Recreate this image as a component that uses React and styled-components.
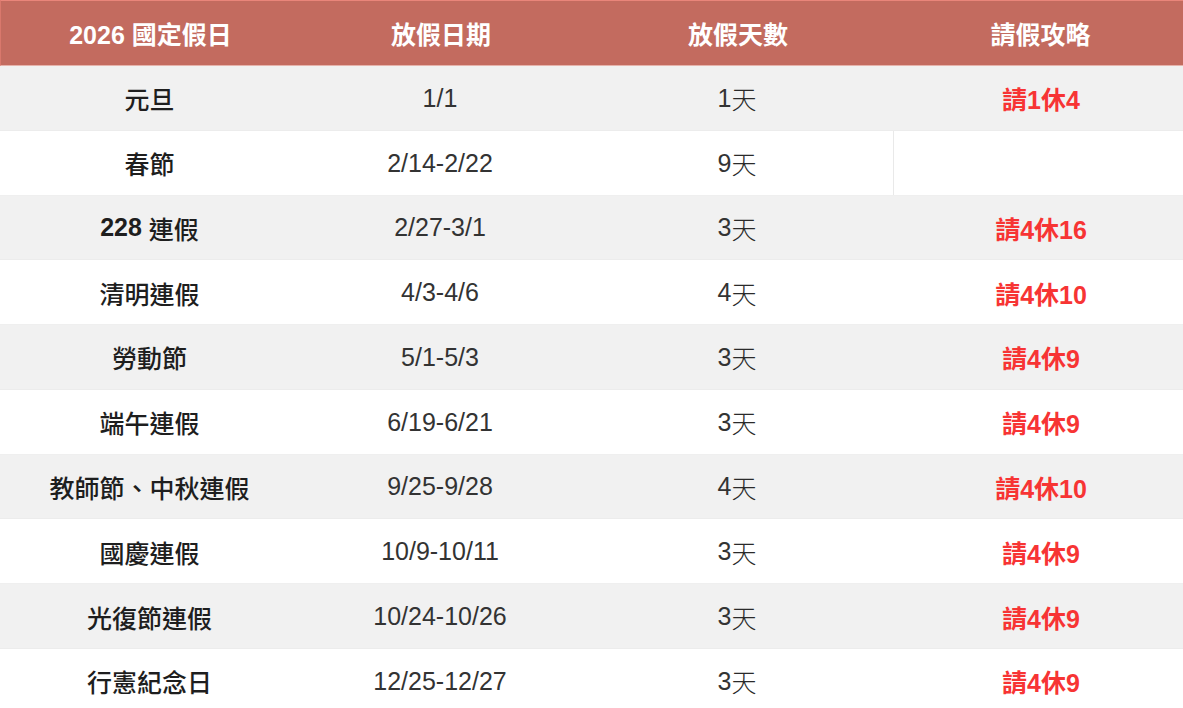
import React from "react";
import styled, { createGlobalStyle } from "styled-components";

const Global = createGlobalStyle`
  html, body { margin: 0; padding: 0; background: #ffffff; }
  body { font-family: "Liberation Sans", "Noto Sans CJK TC", Arial, sans-serif; }
`;

const Table = styled.div`
  width: 1183px;
  display: flex;
  flex-direction: column;
`;

const cols = "299px 282px 312px 1fr";

const HeadRow = styled.div`
  display: grid;
  grid-template-columns: ${cols};
  height: 66px;
  box-sizing: border-box;
  background: #c36b5f;
  border-top: 1px solid #e9857a;
  border-left: 1px solid #d9786c;
  border-bottom: 1px solid #e6b3ab;
`;

const HeadCell = styled.div`
  display: flex;
  align-items: center;
  justify-content: center;
  color: #ffffff;
  font-weight: 700;
  font-size: 25px;
  font-family: "Liberation Sans", "Noto Sans CJK TC", sans-serif;
  padding-left: ${(p) => (p.$shift ? "4px" : "0")};
`;

const Row = styled.div`
  display: grid;
  grid-template-columns: ${cols};
  height: 64.78px;
  box-sizing: border-box;
  background: ${(p) => (p.$alt ? "#f1f1f1" : "#ffffff")};
  border-bottom: 1px solid ${(p) => (p.$alt ? "#ececec" : "#efefef")};
`;

const Cell = styled.div`
  display: flex;
  align-items: center;
  justify-content: center;
  padding-top: 1px;
  font-size: 25px;
  font-family: "Liberation Sans", "Noto Sans CJK TC", sans-serif;
  color: #333333;
  font-weight: 400;
  box-sizing: border-box;
`;

const NameCell = styled(Cell)`
  color: #1e1e1e;
  font-weight: 500;
`;

const TipCell = styled(Cell)`
  color: #f73434;
  font-weight: 700;
  padding-left: 6px;
  border-left: ${(p) => (p.$divider ? "1px solid #e9e9e9" : "none")};
`;

const Num = styled.span`
  font-weight: 700;
`;

const Day = styled.span`
  font-family: "Noto Sans CJK TC", sans-serif;
  font-weight: 300;
  color: #2a2a2a;
`;

const data = [
  ["元旦", "1/1", "1", "請1休4"],
  ["春節", "2/14-2/22", "9", ""],
  ["228|連假", "2/27-3/1", "3", "請4休16"],
  ["清明連假", "4/3-4/6", "4", "請4休10"],
  ["勞動節", "5/1-5/3", "3", "請4休9"],
  ["端午連假", "6/19-6/21", "3", "請4休9"],
  ["教師節、中秋連假", "9/25-9/28", "4", "請4休10"],
  ["國慶連假", "10/9-10/11", "3", "請4休9"],
  ["光復節連假", "10/24-10/26", "3", "請4休9"],
  ["行憲紀念日", "12/25-12/27", "3", "請4休9"],
];

function Name({ text }) {
  if (text.includes("|")) {
    const [n, rest] = text.split("|");
    return (
      <NameCell>
        <Num>{n}</Num>&nbsp;{rest}
      </NameCell>
    );
  }
  return <NameCell>{text}</NameCell>;
}

export default function App() {
  return (
    <>
      <Global />
      <Table>
        <HeadRow>
          <HeadCell>2026 國定假日</HeadCell>
          <HeadCell>放假日期</HeadCell>
          <HeadCell>放假天數</HeadCell>
          <HeadCell $shift>請假攻略</HeadCell>
        </HeadRow>
        {data.map(([name, date, days, tip], i) => (
          <Row key={name} $alt={i % 2 === 0}>
            <Name text={name} />
            <Cell>{date}</Cell>
            <Cell>
              {days}
              <Day>天</Day>
            </Cell>
            <TipCell $divider={tip === ""}>{tip}</TipCell>
          </Row>
        ))}
      </Table>
    </>
  );
}
